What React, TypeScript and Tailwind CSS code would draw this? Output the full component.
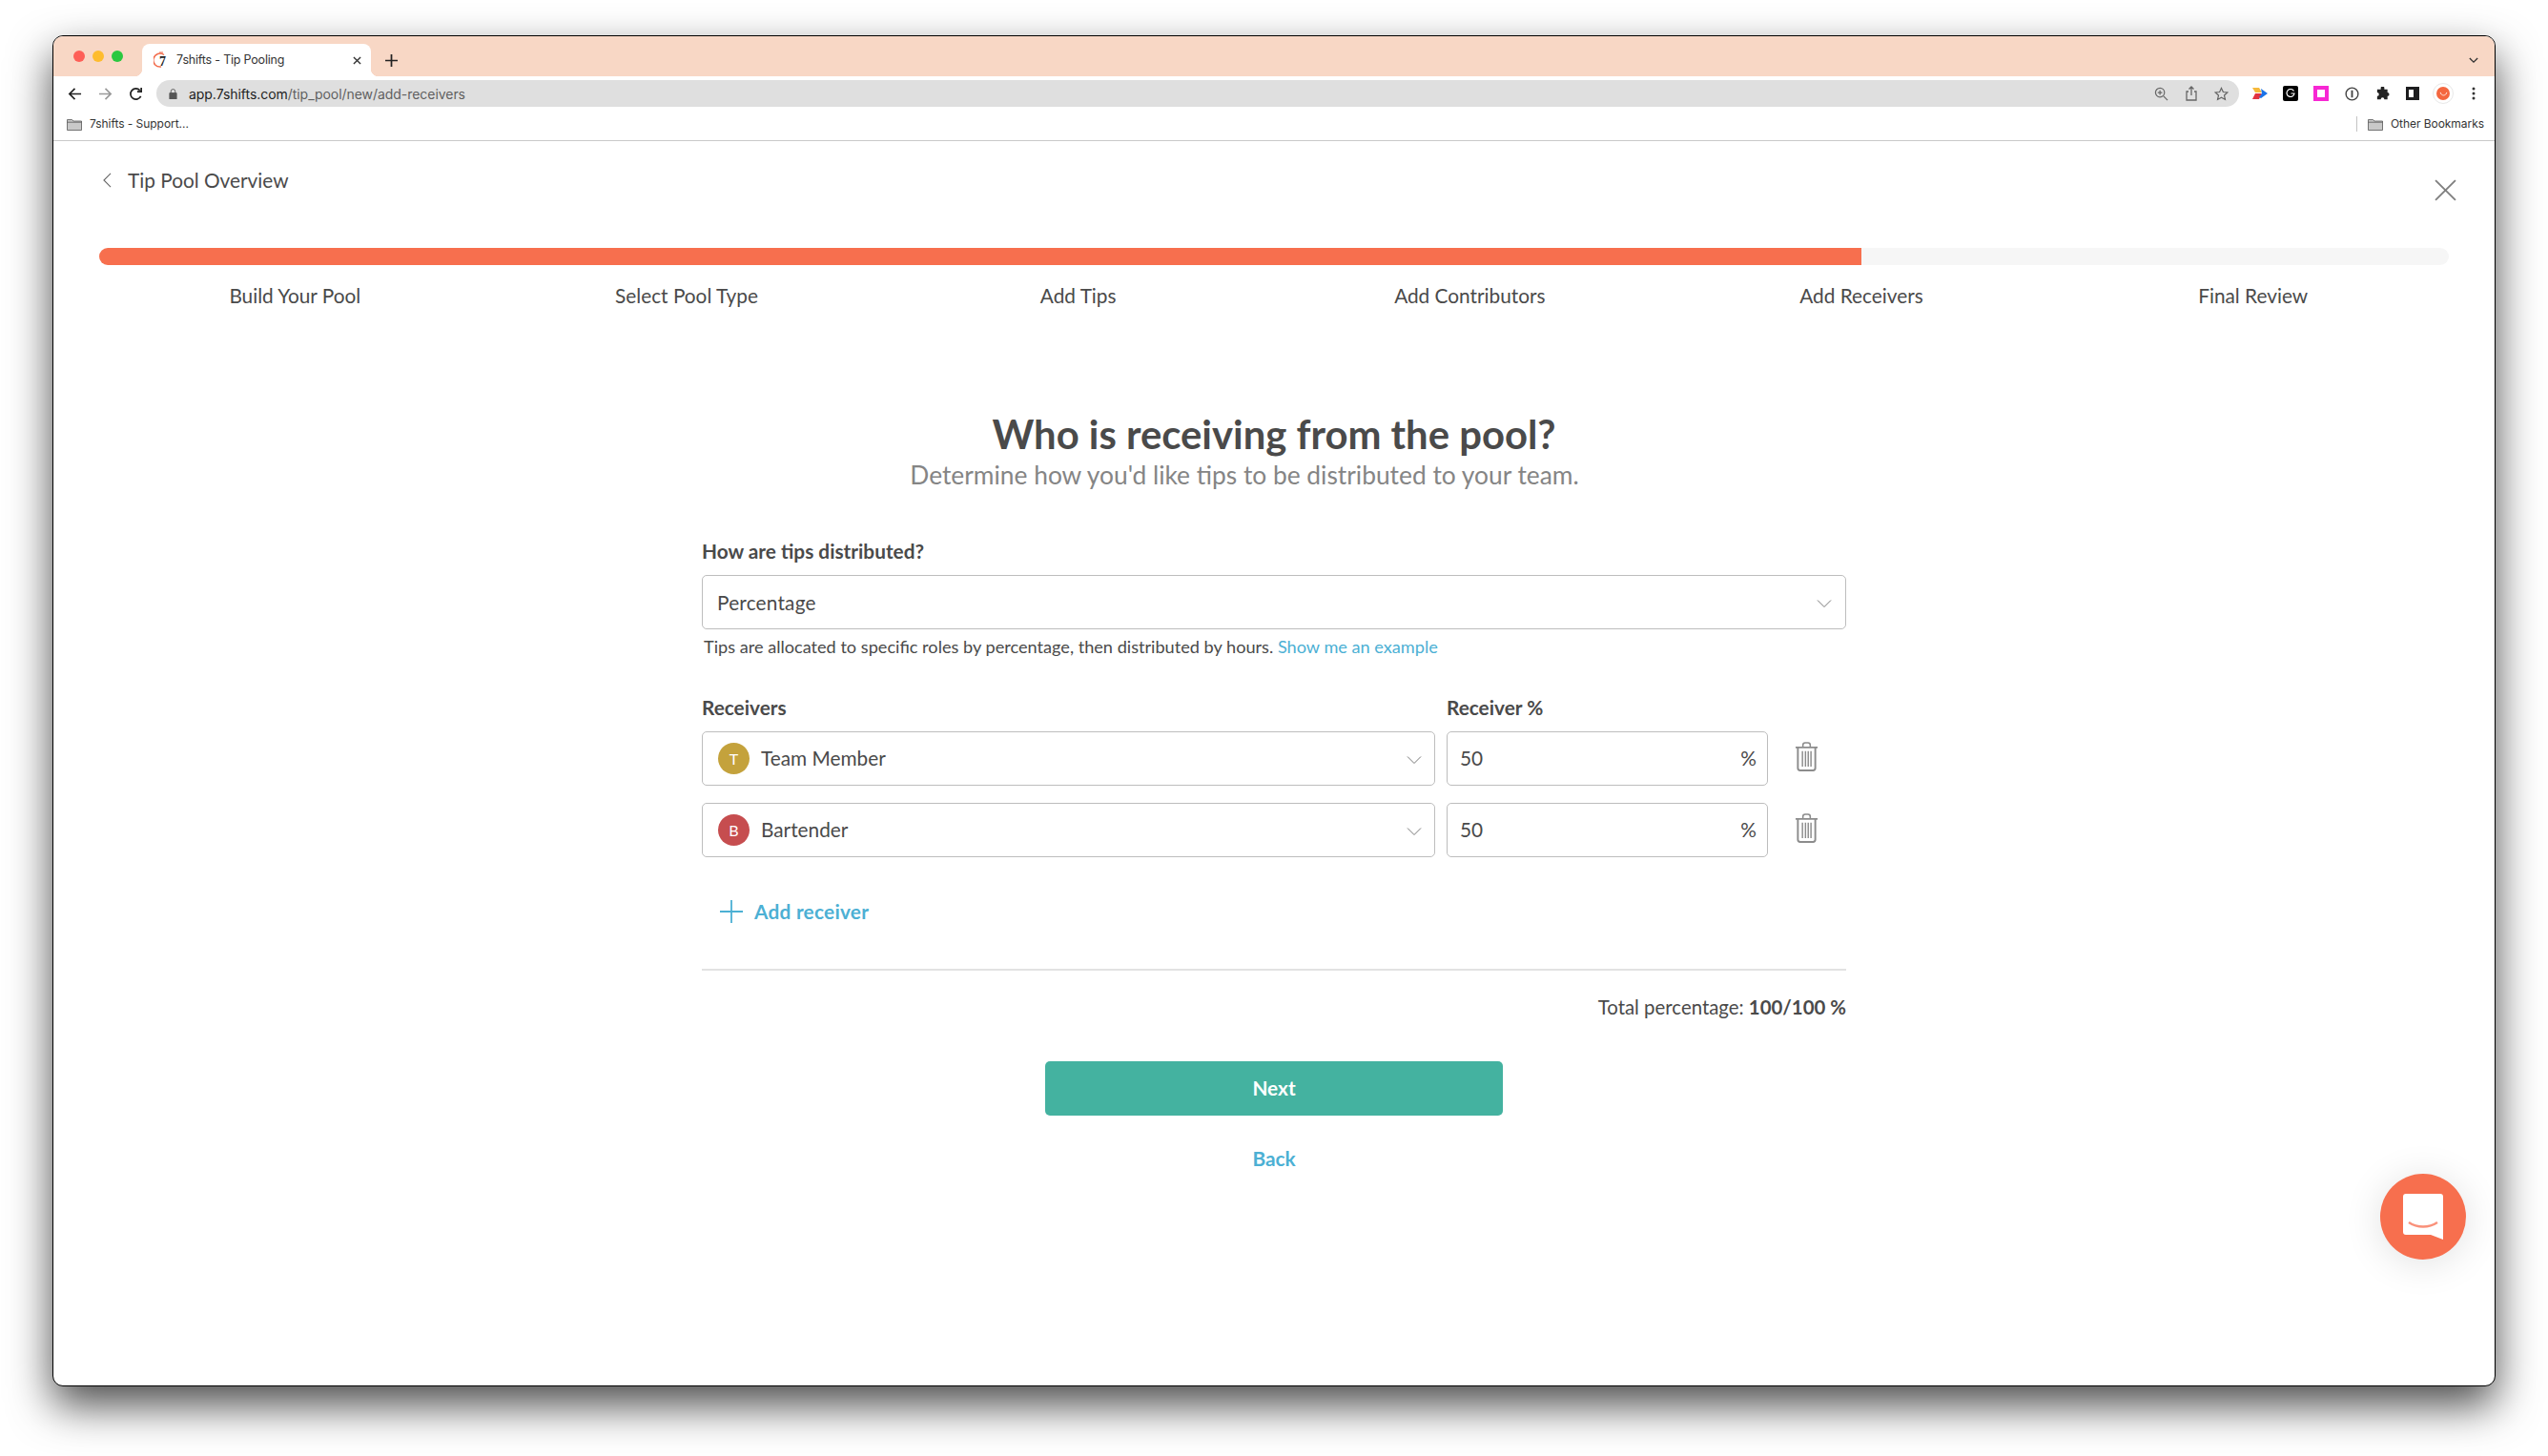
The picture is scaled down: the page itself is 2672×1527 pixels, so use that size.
import React from "react";

const Chevron = ({ className }: { className?: string }) => (
  <svg viewBox="0 0 16 10" className={className} fill="none" stroke="#777" strokeWidth="1">
    <path d="M1 1.5 8 8.5 15 1.5" />
  </svg>
);

const Trash = () => (
  <svg viewBox="0 0 26 32" className="w-[25px] h-[31px]" fill="none" stroke="#8c8c8c" strokeWidth="2">
    <path d="M1 6h24M9 6V3.5C9 2 10 1 11.5 1h3C16 1 17 2 17 3.5V6" strokeWidth="1.6" />
    <path d="M3.5 6v22.5c0 1.5 1 2.5 2.5 2.5h14c1.500 0 2.500-1 2.500-2.500V6" />
    <path d="M8.500 10v17M11.800 10v17M14.800 10v17M17.800 10v17" strokeWidth="1.500" />
  </svg>
);

const Folder = () => (
  <svg viewBox="0 0 16 13" className="w-[16px] h-[13px]">
    <path d="M.5 12.500V1.500h5l1.500 1.500h8.500v9.500z" fill="#c9c9c9" stroke="#555" strokeWidth="0.8" />
    <path d="M.5 4.200h15" stroke="#555" strokeWidth="0.8" />
  </svg>
);

const receivers = [
  { name: "Team Member", letter: "T", color: "bg-[#c4a23c]" },
  { name: "Bartender", letter: "B", color: "bg-[#c64d4f]" },
];

const steps = ["Build Your Pool", "Select Pool Type", "Add Tips", "Add Contributors", "Add Receivers", "Final Review"];

const Slot = ({ children }: { children: React.ReactNode }) => (
  <div className="w-[32px] flex items-center justify-center">{children}</div>
);

export default function App() {
  return (
    <div className="w-full h-[1527px] bg-white pl-[55px] pt-[37px] overflow-hidden font-['Lato',sans-serif] text-[#4a4a4a]">
      <div className="relative flex flex-col h-[1417px] w-[2562px] border border-black rounded-[11px] overflow-hidden bg-white shadow-[0_20px_45px_rgba(0,0,0,0.7)]">
        {/* tab strip */}
        <div className="h-[42px] shrink-0 bg-[#f8d7c5] flex items-end font-['Inter',sans-serif]">
          <div className="flex items-center gap-[8px] pl-[21px] w-[93px] h-[42px] pb-[1px]">
            <span className="w-[12px] h-[12px] rounded-full bg-[#fe5f57]" />
            <span className="w-[12px] h-[12px] rounded-full bg-[#febc2e]" />
            <span className="w-[12px] h-[12px] rounded-full bg-[#2ac840]" />
          </div>
          <div className="relative w-[240px] h-[34px] bg-white rounded-t-[8px] flex items-center pl-[12px] pr-[10px] text-[12.500px] text-[#333]">
            <span className="absolute -left-[8px] bottom-0 w-[8px] h-[8px] bg-[radial-gradient(circle_at_0_0,#f8d7c5_8px,#fff_8.5px)]" />
            <span className="absolute -right-[8px] bottom-0 w-[8px] h-[8px] bg-[radial-gradient(circle_at_100%_0,#f8d7c5_8px,#fff_8.5px)]" />
            <span className="relative w-[16px] h-[18px] shrink-0">
              <svg viewBox="0 0 16 18" className="w-[16px] h-[18px]" fill="none">
                <path d="M11 3.500A7 7 0 1 0 8 16" stroke="#f26c4c" strokeWidth="1.500" />
                <path d="M6 1h4" stroke="#f26c4c" strokeWidth="1.200" />
              </svg>
              <span className="absolute left-[6px] top-[3px] text-[14px] leading-[15px] font-semibold text-[#222] font-['Liberation_Serif',serif]">7</span>
            </span>
            <span className="ml-[8px] flex-1 whitespace-nowrap tracking-[-0.2px]">7shifts - Tip Pooling</span>
            <svg viewBox="0 0 10 10" className="w-[9px] h-[9px]" stroke="#333" strokeWidth="1.500"><path d="M1 1l8 8M9 1l-8 8" /></svg>
          </div>
          <div className="ml-[15px] h-[34px] flex items-center">
            <svg viewBox="0 0 12 12" className="w-[13px] h-[13px]" stroke="#222" strokeWidth="1.600"><path d="M6 0v12M0 6h12" /></svg>
          </div>
          <div className="flex-1" />
          <div className="h-[34px] flex items-center pr-[17px]">
            <svg viewBox="0 0 12 8" className="w-[10px] h-[7px]" fill="none" stroke="#333" strokeWidth="1.600"><path d="M1 1l5 5 5-5" /></svg>
          </div>
        </div>
        {/* toolbar */}
        <div className="h-[36px] shrink-0 flex items-center font-['Inter',sans-serif]">
          <div className="w-[108px] pl-[15px] flex items-center gap-[17px] shrink-0">
            <svg viewBox="0 0 16 16" className="w-[15px] h-[15px]" fill="none" stroke="#222" strokeWidth="1.800"><path d="M15 8H2M8 2 2 8l6 6" /></svg>
            <svg viewBox="0 0 16 16" className="w-[15px] h-[15px]" fill="none" stroke="#9a9a9a" strokeWidth="1.800"><path d="M1 8h13M8 2l6 6-6 6" /></svg>
            <svg viewBox="0 0 16 16" className="w-[15px] h-[15px]" fill="none" stroke="#222" strokeWidth="1.800"><path d="M13.500 10.500A6 6 0 1 1 12.500 4M14 1v4.500H9.500" /></svg>
          </div>
          <div className="w-[2184px] h-[28px] shrink-0 rounded-full bg-[#dfdfdf] flex items-center pl-[13px] pr-[11px] text-[14px] text-[#5f5f5f]">
            <svg viewBox="0 0 10 12" className="w-[9px] h-[11px]" fill="#555"><path d="M1 5h8v7H1zM2.500 5V3a2.500 2.500 0 0 1 5 0v2" stroke="#555" fill="none" /><path d="M1 5h8v7H1z" /></svg>
            <span className="ml-[12px] tracking-[-0.05px] whitespace-nowrap"><span className="text-[#222]">app.7shifts.com</span>/tip_pool/new/add-receivers</span>
            <span className="flex-1" />
            <div className="flex items-center gap-[17px]">
              <svg viewBox="0 0 16 16" className="w-[15px] h-[15px]" fill="none" stroke="#666" strokeWidth="1.300"><circle cx="6.500" cy="6.500" r="5" /><path d="M10.500 10.500 15 15M6.500 4v5M4 6.500h5" /></svg>
              <svg viewBox="0 0 14 16" className="w-[14px] h-[16px]" fill="none" stroke="#666" strokeWidth="1.300"><path d="M4 6H2v9h10V6h-2M7 10V1M4.500 3.500 7 1l2.500 2.500" /></svg>
              <svg viewBox="0 0 16 16" className="w-[15px] h-[15px]" fill="none" stroke="#666" strokeWidth="1.300"><path d="m8 1.500 2 4.400 4.700.5-3.500 3.200 1 4.700L8 11.900l-4.200 2.400 1-4.700L1.300 6.400 6 5.900z" /></svg>
            </div>
          </div>
          <div className="flex items-center pl-[6px]">
            <Slot><svg viewBox="0 0 16 12" className="w-[16px] h-[12px]"><path d="M0 0h7l3 5H3z" fill="#f6b93b" /><path d="M3 6h7l-3 6H0z" fill="#e2333f" /><path d="M9 1l7 5-7 5-2-1 3-4z" fill="#1a73e8" /></svg></Slot>
            <Slot>
              <span className="w-[16px] h-[16px] bg-black rounded-[2px] flex items-center justify-center">
                <svg viewBox="0 0 10 10" className="w-[10px] h-[10px]" fill="none" stroke="#fff" strokeWidth="1.200"><path d="M8.500 2.500A4 4 0 1 0 9 5H5.500" /></svg>
              </span>
            </Slot>
            <Slot><span className="w-[16px] h-[16px] bg-[#f727d3] flex items-center justify-center"><span className="w-[8px] h-[8px] bg-white" /></span></Slot>
            <Slot><svg viewBox="0 0 16 16" className="w-[15px] h-[15px]" fill="none" stroke="#444" strokeWidth="1.500"><circle cx="8" cy="8" r="6.800" /><path d="M8 4v8" strokeWidth="2" /></svg></Slot>
            <Slot><svg viewBox="0 0 16 16" className="w-[15px] h-[15px]" fill="#222"><path d="M6 1.500a2 2 0 0 1 4 0V3h3.500v3.500a2 2 0 0 1 0 4V14H10a2 2 0 0 0-4 0H2v-3.500a2 2 0 0 0 0-4V3h4z" /></svg></Slot>
            <Slot><span className="w-[14px] h-[14px] bg-white border-[3px] border-r-[6px] border-[#1d1d1f]" /></Slot>
            <Slot>
              <span className="w-[22px] h-[22px] rounded-full border border-[#e8e8e8] flex items-center justify-center">
                <span className="w-[14px] h-[14px] rounded-full bg-[#f4673f] flex items-center justify-center">
                  <svg viewBox="0 0 10 6" className="w-[9px] h-[5px]" fill="none" stroke="#fff" strokeWidth="1"><path d="M1 1c1 5 7 5 8 0" /></svg>
                </span>
              </span>
            </Slot>
            <Slot><svg viewBox="0 0 4 14" className="w-[4px] h-[14px]" fill="#333"><circle cx="2" cy="2" r="1.500" /><circle cx="2" cy="7" r="1.500" /><circle cx="2" cy="12" r="1.500" /></svg></Slot>
          </div>
        </div>
        {/* bookmarks */}
        <div className="h-[32px] shrink-0 flex items-center pb-[3px] pl-[14px] pr-[11px] border-b border-[#c9c9c9] text-[12px] text-[#333] font-['Inter',sans-serif]">
          <Folder />
          <span className="ml-[8px] tracking-[-0.05px]">7shifts - Support...</span>
          <span className="flex-1" />
          <span className="w-px h-[16px] bg-[#c4c4c4] mr-[11px]" />
          <Folder />
          <span className="ml-[8px] tracking-[-0.05px]">Other Bookmarks</span>
        </div>
        {/* page */}
        <div className="flex-1 px-[48px]">
          <div className="flex items-start justify-between h-[112px]">
            <div className="flex items-center pt-[29px] pl-[4px] text-[20.800px] leading-[24px] text-[#4a4a4a]">
              <svg viewBox="0 0 10 18" className="w-[9px] h-[16px]" fill="none" stroke="#666" strokeWidth="1.200"><path d="M9 1 1 9l8 8" /></svg>
              <span className="ml-[17px]">Tip Pool Overview</span>
            </div>
            <svg viewBox="0 0 22 22" className="w-[23px] h-[23px] mt-[40px] -mr-[8px]" fill="none" stroke="#808080" strokeWidth="1.800"><path d="M1 1l20 20M21 1 1 21" /></svg>
          </div>
          <div className="h-[18px] rounded-full bg-[#f6f6f6] overflow-hidden">
            <div className="h-full w-[75%] bg-[#f76f4e]" />
          </div>
          <div className="grid grid-cols-6 mt-[20px] text-[20.800px] leading-[24px] text-center text-[#4a4a4a]">
            {steps.map((s) => <div key={s}>{s}</div>)}
          </div>
          <div className="mt-[110px] flex flex-col items-center">
            <h1 className="text-[41.800px] leading-[46px] font-bold text-[#4a4a4a]">Who is receiving from the pool?</h1>
            <p className="text-[26.350px] leading-[30px] mt-[5px] text-[#858585] -translate-x-[31px]">Determine how you'd like tips to be distributed to your team.</p>
          </div>
          <div className="w-[1200px] mx-auto mt-[53px] text-[20.800px]">
            <div className="font-bold leading-[24px]">How are tips distributed?</div>
            <div className="mt-[13px] h-[57px] border border-[#bdbdbd] rounded-[5px] flex items-center justify-between pl-[15px] pr-[14px]">
              <span className="tracking-[0.2px]">Percentage</span>
              <Chevron className="w-[16px] h-[10px] mt-[3px]" />
            </div>
            <div className="mt-[7px] pl-[2px] text-[18.150px] leading-[22px]">
              Tips are allocated to specific roles by percentage, then distributed by hours. <span className="text-[#4cb0d4]">Show me an example</span>
            </div>
            <div className="mt-[41px] flex gap-[12px] font-bold leading-[24px]">
              <div className="w-[769px]">Receivers</div>
              <div>Receiver %</div>
            </div>
            <div className="mt-[13px] flex flex-col gap-[18px]">
              {receivers.map((r) => (
                <div key={r.name} className="flex gap-[12px] items-center">
                  <div className="w-[769px] h-[57px] border border-[#bdbdbd] rounded-[5px] flex items-center pl-[16px] pr-[13px]">
                    <span className={`w-[33px] h-[33px] rounded-full ${r.color} text-white text-[16px] flex items-center justify-center`}>{r.letter}</span>
                    <span className="ml-[12px] flex-1 pb-[2px]">{r.name}</span>
                    <Chevron className="w-[16px] h-[10px] mt-[3px]" />
                  </div>
                  <div className="w-[337px] h-[57px] border border-[#bdbdbd] rounded-[5px] flex items-center justify-between pl-[13px] pr-[11px] pb-[2px]">
                    <span>50</span>
                    <span>%</span>
                  </div>
                  <div className="ml-[16px] -mt-[4px]"><Trash /></div>
                </div>
              ))}
            </div>
            <div className="mt-[45px] pl-[19px] flex items-center text-[#4cb0d4] font-bold leading-[24px]">
              <svg viewBox="0 0 24 24" className="w-[24px] h-[24px]" fill="none" stroke="#4cb0d4" strokeWidth="1.800"><path d="M12 0v24M0 12h24" /></svg>
              <span className="ml-[12px] tracking-[0.25px]">Add receiver</span>
            </div>
            <div className="mt-[48px] h-[2px] bg-[#e2e2e2]" />
            <div className="mt-[26px] text-[20.400px] text-right leading-[24px]">Total percentage: <b>100/100 %</b></div>
            <button className="block mt-[45px] mx-auto w-[480px] h-[57px] rounded-[5px] bg-[#44b2a0] text-white font-bold pb-[2px]">Next</button>
            <div className="mt-[33px] text-center font-bold text-[#4cb0d4] leading-[24px]">Back</div>
          </div>
        </div>
        {/* chat */}
        <div className="absolute left-[2440px] top-[1193px] w-[90px] h-[90px] rounded-full bg-[#f76f4e] shadow-[0_4px_40px_rgba(0,0,0,0.12)] flex items-center justify-center">
          <svg viewBox="0 0 42 48" className="w-[42px] h-[48px]">
            <path d="M3 0h36a3 3 0 0 1 3 3v45l-13-5H3a3 3 0 0 1-3-3V3a3 3 0 0 1 3-3z" fill="#fff" />
            <path d="M6 30c9 6 21 6 30 0" fill="none" stroke="#f9917a" strokeWidth="2.500" />
          </svg>
        </div>
      </div>
    </div>
  );
}
